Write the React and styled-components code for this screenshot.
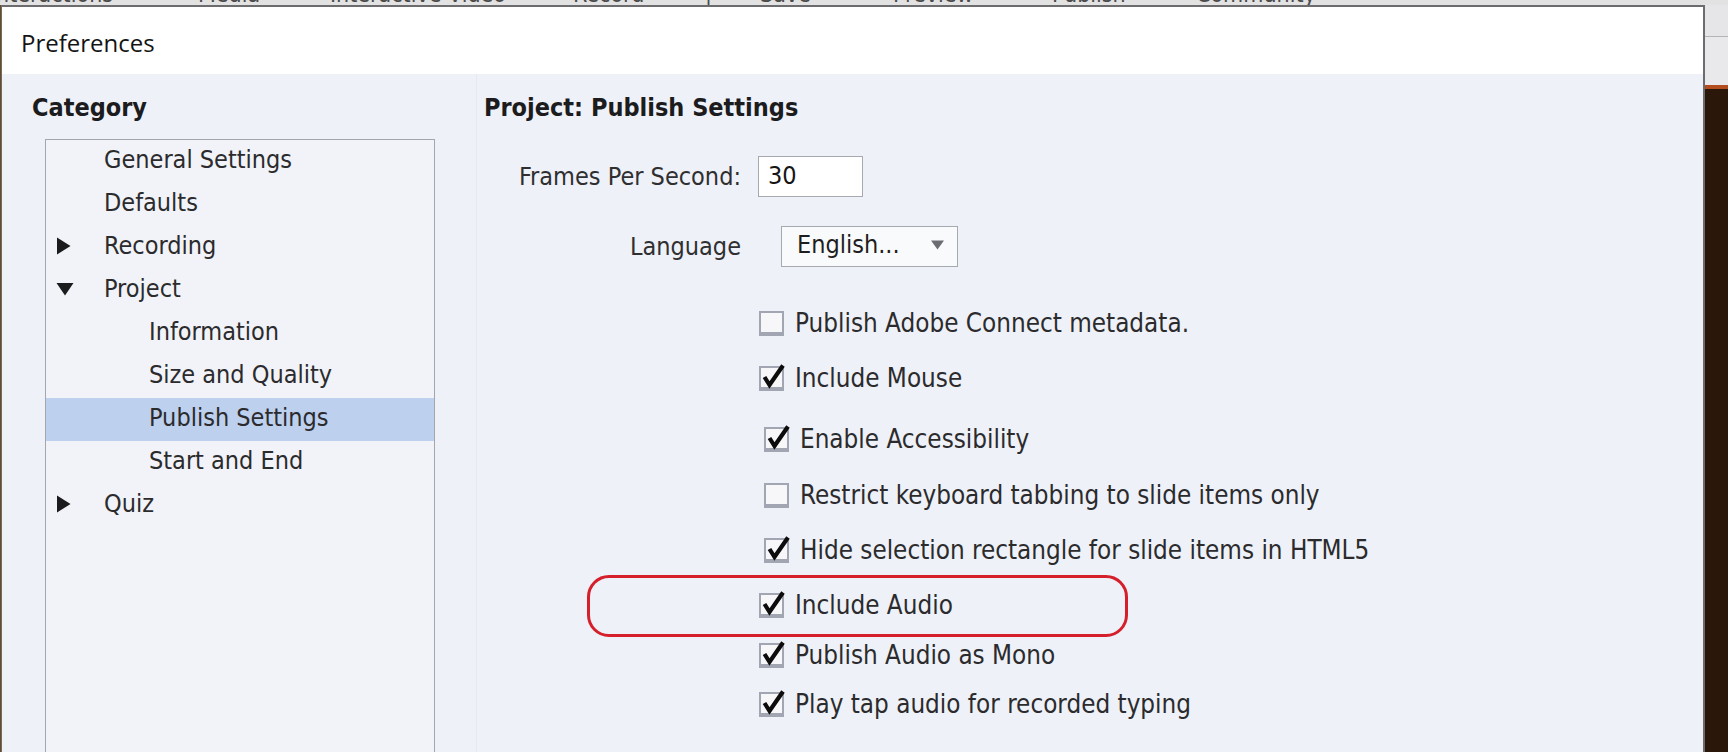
import styled, { createGlobalStyle } from "styled-components";

const UI_FONT = `"DejaVu Sans Condensed", "DejaVu Sans", Tahoma, sans-serif`;

const GlobalStyle = createGlobalStyle`
  html, body {
    margin: 0;
    padding: 0;
  }
  body {
    width: 1728px;
    height: 752px;
    overflow: hidden;
    background: #2a1709;
    font-family: ${UI_FONT};
    font-stretch: condensed;
  }
`;

const Screen = styled.div`
  width: 1728px;
  height: 752px;
  display: flex;
  flex-direction: column;
  overflow: hidden;
  background: #2a1709;
`;

// the app's menu bar behind the dialog, only its lower edge shows
const MenuStrip = styled.div`
  height: 5px;
  flex: none;
  display: flex;
  background: #e2e2e2;
  overflow: hidden;
  white-space: nowrap;
`;

const MenuItem = styled.span`
  flex: none;
  width: ${(p) => (p.$w ? `${p.$w}px` : "auto")};
  margin-left: ${(p) => p.$shift || 0}px;
  margin-top: -17px;
  font-size: 23px;
  line-height: 23px;
  color: #4a4a4a;
`;

const Desk = styled.div`
  flex: 1;
  display: flex;
  min-height: 0;
`;

const LeftEdge = styled.div`
  width: 1px;
  flex: none;
  background: #6e4b1f;
`;

const RightEdge = styled.div`
  width: 23px;
  flex: none;
  display: flex;
  flex-direction: column;
`;

const EdgeTop = styled.div`
  height: 31px;
  background: #e6e6e8;
  border-bottom: 1px solid #b4b4b8;
`;

const EdgeMid = styled.div`
  height: 48px;
  background: #e9e9eb;
  border-bottom: 4px solid #b44d1e;
`;

const EdgeRest = styled.div`
  flex: 1;
  background: #2a1709;
`;

const Dialog = styled.div`
  flex: 1;
  display: flex;
  flex-direction: column;
  border: 2px solid #6c6c6e;
  border-left-width: 1px;
  border-bottom: none;
  background: #eef1f7;
  min-width: 0;
`;

const Header = styled.div`
  height: 67px;
  flex: none;
  display: flex;
  align-items: center;
  padding: 3px 0 0 19px;
  box-sizing: border-box;
  background: #ffffff;
`;

const Title = styled.h1`
  margin: 0;
  font-family: "Open Sans", "Noto Sans", sans-serif;
  font-weight: 400;
  font-stretch: normal;
  font-size: 24px;
  color: #141414;
`;

const Body = styled.div`
  flex: 1;
  display: flex;
  min-height: 0;
`;

const CategoryColumn = styled.div`
  width: 474px;
  flex: none;
  display: flex;
  flex-direction: column;
  padding: 19px 0 0 30px;
  box-sizing: border-box;
`;

const SectionTitle = styled.h2`
  margin: 0;
  font-size: 25px;
  line-height: 30px;
  font-weight: 700;
  color: #1c1c1e;
`;

const TreeBox = styled.div`
  margin: 16px 0 0 13px;
  width: 390px;
  flex: 1;
  box-sizing: border-box;
  border: 1px solid #a4a6ad;
  border-bottom: none;
  background: #f1f3f8;
`;

const TreeRow = styled.div`
  height: 43px;
  display: flex;
  align-items: center;
  padding-bottom: 4px;
  box-sizing: border-box;
  background: ${(p) => (p.$selected ? "#bdd0ed" : "transparent")};
  font-size: 25px;
  color: #2b2b2d;
`;

const ArrowSlot = styled.span`
  width: 58px;
  flex: none;
  display: flex;
  align-items: center;
  padding-left: 10px;
  box-sizing: border-box;
`;

const TreeLabel = styled.span`
  margin-left: ${(p) => p.$level * 45}px;
`;

const SettingsPanel = styled.div`
  flex: 1;
  position: relative;
  padding: 19px 0 0 7px;
  border-left: 1px solid #e6e9f0;
`;

const FormRow = styled.div`
  display: flex;
  align-items: center;
  height: 41px;
  margin-top: ${(p) => p.$top}px;
`;

const FieldLabel = styled.span`
  width: 257px;
  flex: none;
  text-align: right;
  font-size: 25px;
  color: #2f2f31;
`;

const NumberBox = styled.div`
  margin-left: 17px;
  width: 105px;
  height: 41px;
  box-sizing: border-box;
  display: flex;
  align-items: center;
  padding: 0 0 2px 9px;
  border: 1px solid #a7a9b0;
  background: #ffffff;
  font-size: 25px;
  color: #151515;
`;

const SelectBox = styled.div`
  margin-left: 40px;
  width: 177px;
  height: 41px;
  box-sizing: border-box;
  display: flex;
  align-items: center;
  justify-content: space-between;
  padding: 0 13px 4px 15px;
  border: 1px solid #a7a9b0;
  background: #f9fafc;
  font-size: 25px;
  color: #1e1e20;
`;

const CheckRow = styled.div`
  display: flex;
  align-items: center;
  height: 30px;
  margin-top: ${(p) => p.$top}px;
  margin-left: ${(p) => 275 + (p.$shift || 0)}px;
`;

const Box = styled.span`
  position: relative;
  width: 25px;
  height: 25px;
  flex: none;
  box-sizing: border-box;
  border: 2px solid #a2a5b2;
  border-bottom-width: 4px;
  background: #f7f7fa;
`;

const Tick = styled.svg`
  position: absolute;
  left: -2px;
  top: -4px;
  overflow: visible;
`;

const CheckText = styled.span`
  margin-left: 11px;
  font-size: 25.8px;
  color: #2b2b2d;
  white-space: nowrap;
`;

const Highlight = styled.div`
  position: absolute;
  left: 110px;
  top: 501px;
  width: 541px;
  height: 62px;
  box-sizing: border-box;
  border: 3px solid #d51f2a;
  border-radius: 22px;
  pointer-events: none;
`;

const TriangleRight = () => (
  <svg width="15" height="18" viewBox="0 0 15 18">
    <path d="M1 0.5 L14.5 9 L1 17.5 Z" fill="#1b1b1d" />
  </svg>
);

const TriangleDown = () => (
  <svg width="18" height="14" viewBox="0 0 18 14">
    <path d="M0.5 1 L17.5 1 L9 13.5 Z" fill="#1b1b1d" />
  </svg>
);

const SelectArrow = () => (
  <svg width="13" height="10" viewBox="0 0 13 10">
    <path d="M0 0.5 L13 0.5 L6.5 9.5 Z" fill="#6a6c72" />
  </svg>
);

const Checkbox = ({ checked }) => (
  <Box>
    {checked && (
      <Tick width="27" height="27" viewBox="0 0 27 27">
        <path
          d="M5.5 13 L10.5 21 L24 1.5"
          fill="none"
          stroke="#0c0c0c"
          strokeWidth="4.2"
          strokeLinejoin="miter"
        />
      </Tick>
    )}
  </Box>
);

const tree = [
  { label: "General Settings", level: 0 },
  { label: "Defaults", level: 0 },
  { label: "Recording", level: 0, arrow: "right" },
  { label: "Project", level: 0, arrow: "down" },
  { label: "Information", level: 1 },
  { label: "Size and Quality", level: 1 },
  { label: "Publish Settings", level: 1, selected: true },
  { label: "Start and End", level: 1 },
  { label: "Quiz", level: 0, arrow: "right" },
];

const options = [
  { label: "Publish Adobe Connect metadata.", checked: false, top: 41 },
  { label: "Include Mouse", checked: true, top: 25 },
  { label: "Enable Accessibility", checked: true, top: 31, shift: 5 },
  { label: "Restrict keyboard tabbing to slide items only", checked: false, top: 26, shift: 5 },
  { label: "Hide selection rectangle for slide items in HTML5", checked: true, top: 25, shift: 5 },
  { label: "Include Audio", checked: true, top: 25 },
  { label: "Publish Audio as Mono", checked: true, top: 20 },
  { label: "Play tap audio for recorded typing", checked: true, top: 19 },
];

const menu = [
  { label: "Interactions", w: 208, shift: -10 },
  { label: "Media", w: 132 },
  { label: "Interactive Video", w: 243 },
  { label: "Record", w: 132 },
  { label: "|", w: 55 },
  { label: "Save", w: 133 },
  { label: "Preview", w: 159 },
  { label: "Publish", w: 144 },
  { label: "Community" },
];

export default function App() {
  return (
    <>
      <GlobalStyle />
      <Screen>
        <MenuStrip>
          {menu.map((m) => (
            <MenuItem key={m.label} $w={m.w} $shift={m.shift}>
              {m.label}
            </MenuItem>
          ))}
        </MenuStrip>
        <Desk>
          <LeftEdge />
          <Dialog>
            <Header>
              <Title>Preferences</Title>
            </Header>
            <Body>
              <CategoryColumn>
                <SectionTitle>Category</SectionTitle>
                <TreeBox>
                  {tree.map((item) => (
                    <TreeRow key={item.label} $selected={item.selected}>
                      <ArrowSlot>
                        {item.arrow === "right" && <TriangleRight />}
                        {item.arrow === "down" && <TriangleDown />}
                      </ArrowSlot>
                      <TreeLabel $level={item.level}>{item.label}</TreeLabel>
                    </TreeRow>
                  ))}
                </TreeBox>
              </CategoryColumn>
              <SettingsPanel>
                <SectionTitle>Project: Publish Settings</SectionTitle>
                <FormRow $top={33}>
                  <FieldLabel>Frames Per Second:</FieldLabel>
                  <NumberBox>30</NumberBox>
                </FormRow>
                <FormRow $top={29}>
                  <FieldLabel>Language</FieldLabel>
                  <SelectBox>
                    <span>English...</span>
                    <SelectArrow />
                  </SelectBox>
                </FormRow>
                {options.map((o) => (
                  <CheckRow key={o.label} $top={o.top} $shift={o.shift}>
                    <Checkbox checked={o.checked} />
                    <CheckText>{o.label}</CheckText>
                  </CheckRow>
                ))}
                <Highlight />
              </SettingsPanel>
            </Body>
          </Dialog>
          <RightEdge>
            <EdgeTop />
            <EdgeMid />
            <EdgeRest />
          </RightEdge>
        </Desk>
      </Screen>
    </>
  );
}
